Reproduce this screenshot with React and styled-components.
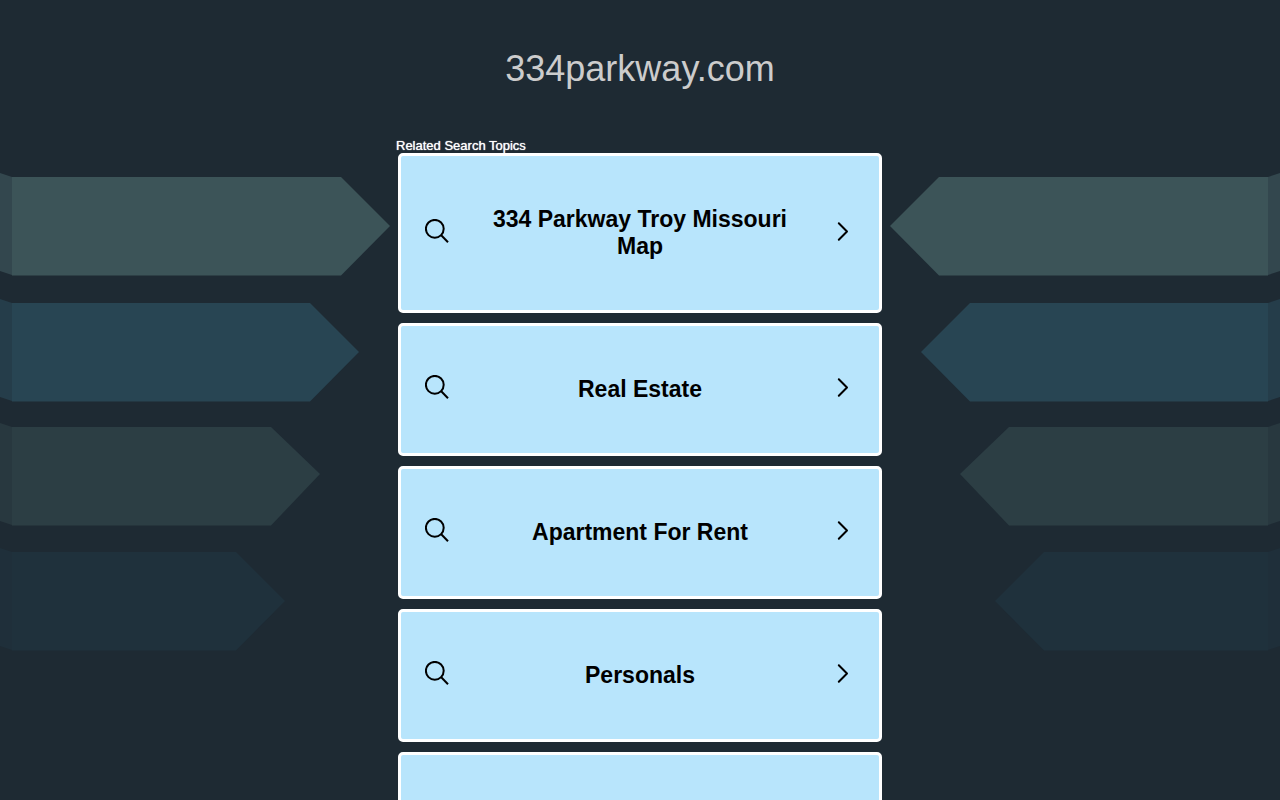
import React from 'react';
import styled, { createGlobalStyle } from 'styled-components';

const GlobalStyle = createGlobalStyle`
  body {
    margin: 0;
    background: #1e2a33;
    font-family: Arial, 'Liberation Sans', sans-serif;
  }
`;

const Page = styled.div`
  min-height: 100vh;
`;

const Header = styled.header`
  padding: 48px 0;
  text-align: center;
`;

const Domain = styled.h1`
  margin: 0;
  font-size: 36px;
  font-weight: 400;
  line-height: 42px;
  color: #ccc;
`;

const Columns = styled.div`
  display: grid;
  grid-template-columns: minmax(0, 1fr) minmax(0, 488px) minmax(0, 1fr);
`;

const Side = styled.div`
  display: flex;
  justify-content: ${({ $flip }) => ($flip ? 'flex-start' : 'flex-end')};
  padding: 31px 6px 0;
  overflow: hidden;
`;

const Ribbons = styled.svg`
  flex: none;
  transform: ${({ $flip }) => ($flip ? 'scaleX(-1)' : 'none')};
`;

const Topics = styled.main`
  padding-bottom: 10px;
`;

const TopicsTitle = styled.h2`
  margin: 0;
  font-size: 13px;
  font-weight: 400;
  line-height: 15px;
  color: #fff;
  text-shadow: 0 0 1px #fff;
`;

const TopicList = styled.ul`
  display: flex;
  flex-direction: column;
  gap: 10px;
  margin: 0;
  padding: 0 2px;
  list-style: none;
`;

const TopicLink = styled.a`
  display: flex;
  align-items: center;
  justify-content: space-between;
  box-sizing: border-box;
  padding: 50px 24px;
  border: 3px solid #fff;
  border-radius: 5px;
  background: #b8e5fc;
  color: #000;
  text-decoration: none;

  &:hover {
    background: #d3effe;
  }
`;

const Label = styled.span`
  flex: 1;
  padding: 0 40px;
  font-size: 23px;
  font-weight: 700;
  line-height: 27px;
  text-align: center;
`;

const Icon = styled.svg`
  flex: none;
  margin: -2px 0 2px;
  fill: none;
  stroke: currentColor;
  stroke-width: 2;
`;

const ribbons = [
  { top: 8, body: 341, tip: 49, fill: '#3c5458', fold: '#33474e' },
  { top: 134, body: 310, tip: 49, fill: '#284553', fold: '#253d4a' },
  { top: 258, body: 271, tip: 47, fill: '#2c3e44', fold: '#28383f' },
  { top: 383, body: 236, tip: 49, fill: '#1f313c', fold: '#1f2f3a' },
];

const topics = [
  '334 Parkway Troy Missouri Map',
  'Real Estate',
  'Apartment For Rent',
  'Personals',
  'Homes For Rent',
];

function SideRibbons({ flip }) {
  return (
    <Side $flip={flip} aria-hidden="true">
      <Ribbons $flip={flip} width="390" height="520" viewBox="0 0 390 520">
        {ribbons.map(({ top, body, tip, fill, fold }) => (
          <g key={top}>
            <path d={`M0 ${top - 4}L12 ${top}V${top + 98}L0 ${top + 94}Z`} fill={fold} />
            <path
              d={`M12 ${top}H${body}L${body + 49} ${top + tip}L${body} ${top + 98.5}H12Z`}
              fill={fill}
            />
          </g>
        ))}
      </Ribbons>
    </Side>
  );
}

function Topic({ label }) {
  return (
    <li>
      <TopicLink href="#">
        <Icon width="25" height="25" viewBox="0 0 25 25" aria-hidden="true">
          <circle cx="9.8" cy="9.8" r="8.9" />
          <path d="M16 16L23 23.2" />
        </Icon>
        <Label>{label}</Label>
        <Icon width="25" height="25" viewBox="0 0 25 25" aria-hidden="true">
          <path
            d="M8.8 4.3L17 12.5L8.8 20.7"
            strokeLinecap="round"
            strokeLinejoin="round"
          />
        </Icon>
      </TopicLink>
    </li>
  );
}

function App() {
  return (
    <Page>
      <GlobalStyle />
      <Header>
        <Domain>334parkway.com</Domain>
      </Header>
      <Columns>
        <SideRibbons />
        <Topics>
          <TopicsTitle>Related Search Topics</TopicsTitle>
          <TopicList>
            {topics.map((label) => (
              <Topic key={label} label={label} />
            ))}
          </TopicList>
        </Topics>
        <SideRibbons flip />
      </Columns>
    </Page>
  );
}

export default App;
